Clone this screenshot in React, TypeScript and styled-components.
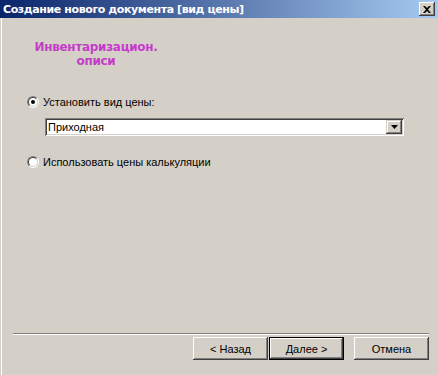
import styled, { createGlobalStyle } from "styled-components";

const face = "#D4D0C8";
const shadow = "#808080";
const darkShadow = "#404040";

const GlobalStyle = createGlobalStyle`
    html, body {
        margin: 0;
        padding: 0;
        background: ${face};
    }
    body {
        font-family: "Liberation Sans", Arial, sans-serif;
        font-size: 11px;
        color: #000;
    }
`;

const App = () => {
    return (
        <>
            <GlobalStyle />
            <Window>
                <TitleBar>
                    <TitleText>Создание нового документа [вид цены]</TitleText>
                    <CloseButton>
                        <svg width="8" height="7" viewBox="0 0 8 7">
                            <path d="M0 0h2l2 2 2-2h2L5 3.5 8 7H6L4 5 2 7H0l3-3.5z" fill="#000" />
                        </svg>
                    </CloseButton>
                </TitleBar>
                <Body>
                    <Heading>
                        Инвентаризацион.
                        <br />
                        описи
                    </Heading>
                    <Options>
                        <OptionRow>
                            <Radio checked />
                            <Label>Установить вид цены:</Label>
                        </OptionRow>
                        <Combo>
                            <ComboValue>Приходная</ComboValue>
                            <ComboArrow>
                                <svg width="7" height="4" viewBox="0 0 7 4">
                                    <path d="M0 0h7L3.5 4z" fill="#000" />
                                </svg>
                            </ComboArrow>
                        </Combo>
                        <OptionRow second>
                            <Radio />
                            <Label>Использовать цены калькуляции</Label>
                        </OptionRow>
                    </Options>
                    <Separator />
                    <ButtonBar>
                        <PushButton>&lt; Назад</PushButton>
                        <PushButton isDefault>Далее &gt;</PushButton>
                        <PushButton gapLeft>Отмена</PushButton>
                    </ButtonBar>
                </Body>
            </Window>
        </>
    );
};

export default App;

const Window = styled.div`
    width: 438px;
    height: 375px;
    display: flex;
    flex-direction: column;
    overflow: hidden;
    background: ${face};
`;

const TitleBar = styled.div`
    height: 18px;
    display: flex;
    align-items: center;
    justify-content: space-between;
    padding: 0 3px 0 3px;
    background: linear-gradient(to right, #0a246a, #a6caf0);
`;

const TitleText = styled.span`
    color: #fff;
    font-family: "DejaVu Sans", Verdana, sans-serif;
    font-weight: bold;
    font-size: 11px;
    letter-spacing: -0.4px;
    white-space: nowrap;
`;

const CloseButton = styled.div`
    width: 16px;
    height: 14px;
    box-sizing: border-box;
    display: flex;
    align-items: center;
    justify-content: center;
    background: ${face};
    box-shadow: inset -1px -1px ${darkShadow}, inset 1px 1px #fff,
        inset -2px -2px ${shadow}, inset 2px 2px ${face};
`;

const Body = styled.div`
    flex: 1;
    display: flex;
    flex-direction: column;
    margin-left: 1px;
    border-left: 1px solid #fff;
`;

const Heading = styled.div`
    width: 150px;
    margin: 22px 0 0 19px;
    text-align: center;
    color: #c43dc9;
    font-family: "DejaVu Sans", Verdana, sans-serif;
    font-weight: bold;
    font-size: 12px;
    line-height: 14px;
    letter-spacing: -0.3px;
`;

const Options = styled.div`
    display: flex;
    flex-direction: column;
    padding-left: 25px;
    margin-top: 27px;
    flex: 1;
`;

const OptionRow = styled.div<{ second?: boolean }>`
    display: flex;
    align-items: center;
    gap: 4px;
    height: 14px;
    margin-top: ${(p) => (p.second ? "19px" : "0")};
`;

const Radio = styled.span<{ checked?: boolean }>`
    position: relative;
    width: 12px;
    height: 12px;
    box-sizing: border-box;
    border-radius: 50%;
    border: 1px solid;
    border-color: ${shadow} #fff #fff ${shadow};

    &::before {
        content: "";
        position: absolute;
        inset: 0;
        border-radius: 50%;
        border: 1px solid;
        border-color: ${darkShadow} ${face} ${face} ${darkShadow};
        background: #fff;
    }

    &::after {
        content: "";
        display: ${(p) => (p.checked ? "block" : "none")};
        position: absolute;
        left: 3px;
        top: 3px;
        width: 4px;
        height: 4px;
        border-radius: 50%;
        background: #000;
    }
`;

const Label = styled.span`
    white-space: nowrap;
    line-height: 14px;
`;

const Combo = styled.div`
    margin: 9px 0 0 18px;
    width: 359px;
    height: 18px;
    box-sizing: border-box;
    display: flex;
    align-items: stretch;
    background: #fff;
    padding: 2px;
    box-shadow: inset 1px 1px ${shadow}, inset -1px -1px #fff,
        inset 2px 2px ${darkShadow}, inset -2px -2px ${face};
`;

const ComboValue = styled.div`
    flex: 1;
    display: flex;
    align-items: center;
    padding-left: 1px;
`;

const ComboArrow = styled.div`
    width: 16px;
    display: flex;
    align-items: center;
    justify-content: center;
    background: ${face};
    box-shadow: inset -1px -1px ${darkShadow}, inset 1px 1px ${face},
        inset -2px -2px ${shadow}, inset 2px 2px #fff;
`;

const Separator = styled.div`
    margin: 0 9px 0 11px;
    height: 1px;
    background: ${shadow};
    border-bottom: 1px solid #fff;
`;

const ButtonBar = styled.div`
    display: flex;
    justify-content: flex-end;
    padding: 2px 9px 15px 0;
`;

const PushButton = styled.div<{ isDefault?: boolean; gapLeft?: boolean }>`
    width: 75px;
    height: 23px;
    box-sizing: border-box;
    display: flex;
    align-items: center;
    justify-content: center;
    margin-left: ${(p) => (p.gapLeft ? "10px" : "1px")};
    background: ${face};
    border: ${(p) => (p.isDefault ? "1px solid #000" : "none")};
    box-shadow: inset -1px -1px ${darkShadow}, inset 1px 1px #fff,
        inset -2px -2px ${shadow}, inset 2px 2px ${face};
`;
